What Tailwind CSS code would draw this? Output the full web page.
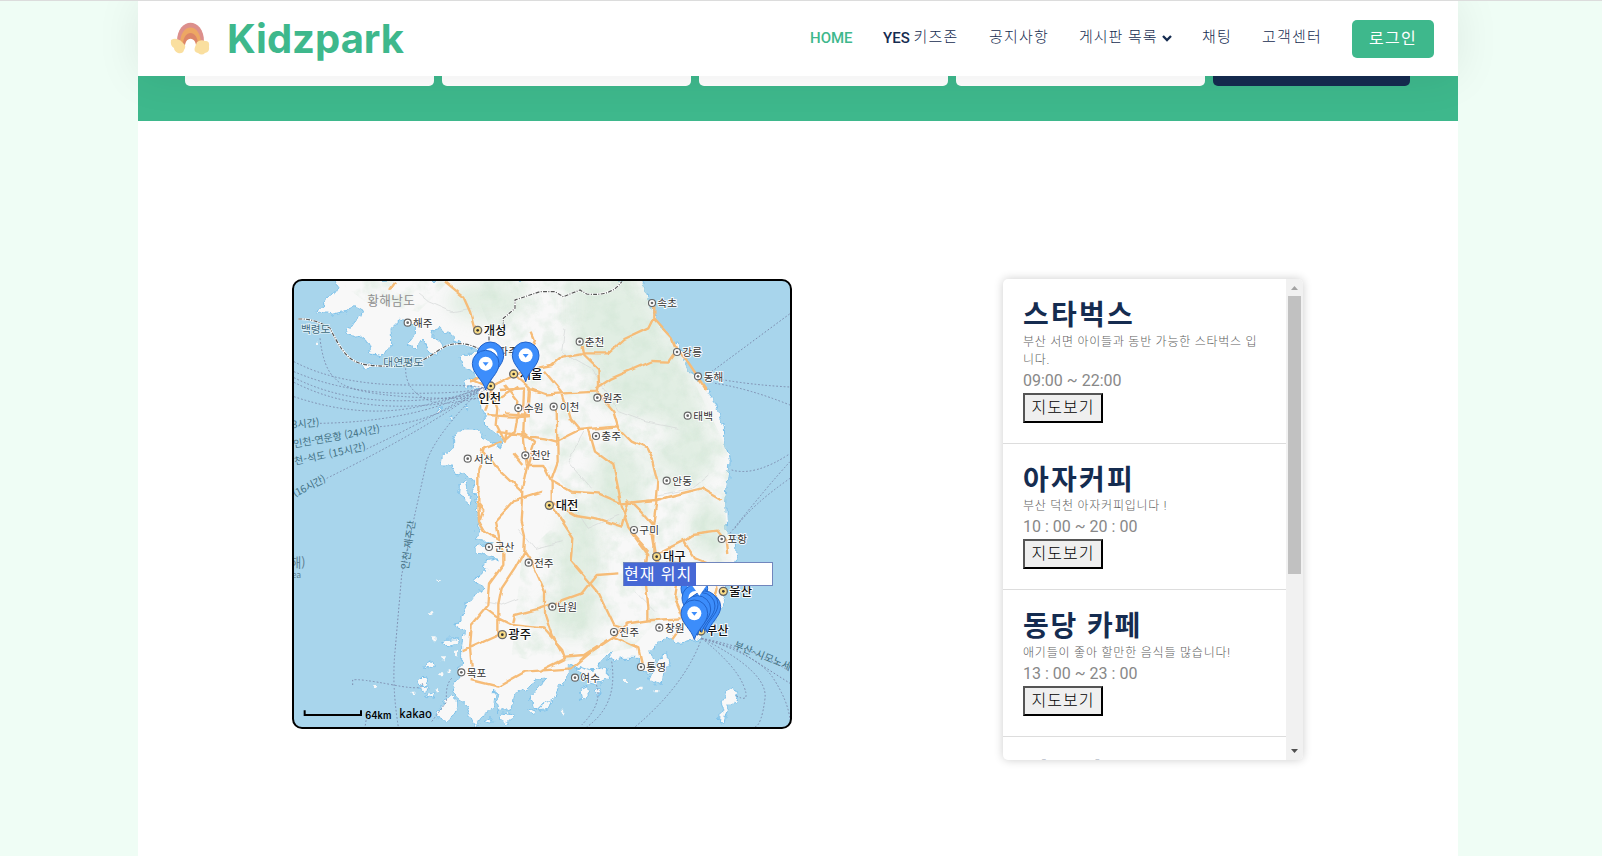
<!DOCTYPE html>
<html lang="ko">
<head>
<meta charset="utf-8">
<title>Kidzpark</title>
<script src="https://cdn.jsdelivr.net/npm/@tailwindcss/browser@4"></script>
</head>
<body class="h-[856px] overflow-hidden border-t border-[#dcdcdc] bg-[#effdf5] font-['Roboto','Noto_Sans_CJK_KR',sans-serif]">
<div class="ml-[138px] h-[856px] w-[1320px] bg-white">
  <header class="relative z-10 flex h-[75px] items-center bg-white pl-8 pr-6 shadow-[0_0_45px_rgba(0,0,0,0.08)]">
    <svg class="mt-[2px] h-[38px] w-[40px]" viewBox="0 0 40 38">
      <path d="M7 22C6-5 35-5 34 22L28 25H14Z" fill="#dc8f8c"/>
      <path d="M10 23C10 1 31 1 31 23L26 26H15Z" fill="#eda763"/>
      <path d="M13 24C13 8 28 8 28 24L25 27H16Z" fill="#dc8668"/>
      <path d="M15 29C13 14 28 14 26 29Z" fill="#fff"/>
      <path d="M1 19q3-2 6-1 4 1 6 4 4 3 1 7-1 4-6 3-4-2-4-5-4-2-3-8Z" fill="#fadf9f"/>
      <path d="M27 21q4-3 8-1 5-1 4 6 1 5-4 6-3 3-7 0-5-1-3-6Z" fill="#fadf9f"/>
    </svg>
    <h1 class="ml-[17px] font-['Inter'] text-[40px] font-bold leading-none text-[#3eb88c]">Kidzpark</h1>
    <nav class="ml-auto flex items-center text-[15px] font-medium text-[#152c50]">
      <a class="w-[73px] text-[#3eb88c]">HOME</a>
      <a class="w-[105px] whitespace-nowrap">YES <span class="relative -top-px font-light tracking-[1.2px]">키즈존</span></a>
      <a class="-mt-[2px] w-[91px] pl-px font-light tracking-[1.2px]">공지사항</a>
      <a class="-mt-[2px] flex w-[123px] items-center whitespace-nowrap font-light tracking-[1px]">게시판 목록
        <svg class="ml-1 h-[8px] w-[10px]" viewBox="0 0 10 8"><path d="m1 2 4 4 4-4" fill="none" stroke="#152c50" stroke-width="2.3"/></svg></a>
      <a class="-mt-[2px] w-[59px] font-light tracking-[1.2px]">채팅</a>
      <a class="-mt-[2px] w-[91px] pl-px font-light tracking-[1.2px]">고객센터</a>
      <button class="h-[38px] w-[82px] rounded-[5px] bg-[#3eb88c] text-base font-normal tracking-[1.2px] text-white">로그인</button>
    </nav>
  </header>
  <section class="flex h-[45px] gap-2 bg-[#3eb88c] pl-[47px]">
    <div class="h-[10px] w-[249px] rounded-b-[5px] bg-white"></div>
    <div class="h-[10px] w-[249px] rounded-b-[5px] bg-white"></div>
    <div class="h-[10px] w-[249px] rounded-b-[5px] bg-white"></div>
    <div class="h-[10px] w-[249px] rounded-b-[5px] bg-white"></div>
    <div class="h-[10px] w-[197px] rounded-b-[5px] bg-[#152c50]"></div>
  </section>
  <main class="flex items-start pt-[158px] pl-[154px]">
    <div class="relative h-[450px] w-[500px] shrink-0 overflow-hidden rounded-[10px] border-2 border-black bg-[#a8d5ec]">
      <svg class="block h-[446px] w-[496px] font-['Noto_Sans_CJK_KR',sans-serif]" viewBox="27 18 1488 1338">
        <defs>
          <filter id="coast" x="0" y="0" width="1560" height="1400" filterUnits="userSpaceOnUse"><feTurbulence type="fractalNoise" baseFrequency=".035" numOctaves="3" seed="8" result="n"/><feDisplacementMap in="SourceGraphic" in2="n" scale="30" xChannelSelector="R" yChannelSelector="G"/></filter>
          <filter id="road" x="0" y="0" width="1560" height="1400" filterUnits="userSpaceOnUse"><feTurbulence type="fractalNoise" baseFrequency=".02" numOctaves="2" seed="3" result="n"/><feDisplacementMap in="SourceGraphic" in2="n" scale="16" xChannelSelector="R" yChannelSelector="G"/></filter>
          <filter id="soft" x="-30%" y="-30%" width="160%" height="160%"><feGaussianBlur stdDeviation="24"/></filter>
          <filter id="relief" x="0" y="0" width="1560" height="1400" filterUnits="userSpaceOnUse"><feTurbulence type="fractalNoise" baseFrequency=".022" numOctaves="5" seed="12"/><feColorMatrix values="0 0 0 0 .62  0 0 0 0 .78  0 0 0 0 .65  2.2 0 0 0 -.9"/><feComposite in2="SourceGraphic" operator="in"/></filter>
          <path id="mainland" d="M158 10 150 45 120 85 92 108 140 118 175 110 210 95 235 110 225 135 180 165 200 190 235 185 250 215 258 240 290 245 320 205 318 160 350 130 385 150 385 180 370 210 395 220 410 195 425 225 460 235 470 205 440 170 470 160 500 190 525 210 570 215 590 232 545 232 525 250 535 278 560 285 575 310 530 318 535 335 580 345 585 400 600 420 602 450 625 470 652 500 645 520 600 490 560 465 535 465 500 490 500 520 475 540 470 570 500 570 515 600 535 595 560 610 570 650 577 700 582 760 568 790 590 800 630 805 568 820 585 838 640 850 590 862 605 880 560 920 600 940 570 955 545 990 530 1020 515 1055 535 1070 530 1110 530 1160 525 1200 500 1230 510 1265 545 1295 570 1356 590 1330 605 1310 625 1300 632 1245 642 1310 680 1300 690 1260 720 1240 755 1215 785 1212 765 1235 730 1275 765 1300 800 1285 822 1240 850 1195 850 1165 890 1180 885 1205 905 1220 925 1210 940 1170 975 1125 975 1160 1015 1150 1060 1150 1060 1190 1090 1195 1110 1160 1095 1130 1120 1100 1150 1090 1180 1105 1240 1095 1280 1040 1310 1000 1320 960 1330 900 1355 845 1350 800 1325 765 1322 675 1330 600 1336 560 1320 510 1318 455 1300 410 1290 380 1262 340 1215 285 1180 215 1110 130 1070 10Z"/>
          <clipPath id="land"><use href="#mainland"/></clipPath>
          <symbol id="pin" viewBox="-45 -45 90 130" overflow="visible"><path d="M0 79C-8 48-40 30-40 0A40 40 0 0 1 40 0C40 30 8 48 0 79Z" fill="#3c8dfb" stroke="#2263c9" stroke-width="3"/><circle r="21" fill="#fff"/><path d="M-9-4H9L0 7Z" fill="#3c8dfb"/></symbol>
          <g id="town"><circle r="10.500" fill="#fff" stroke="#666" stroke-width="3.500"/><circle r="4" fill="#666"/></g>
          <g id="city"><circle r="12" fill="#f9dc86" stroke="#666" stroke-width="4"/><circle r="4" fill="#333"/></g>
        </defs>
        <g filter="url(#coast)" fill="#f8f8f8" stroke="#7fc2ea" stroke-width="3">
          <use href="#mainland"/>
          <path d="M538 610 520 625 518 660 538 675 555 690 560 670 548 645ZM475 1280 500 1268 520 1285 508 1320 485 1340 450 1325 455 1305ZM405 1215 420 1200 428 1218 420 1235 400 1230ZM420 1168 440 1160 448 1172 430 1182ZM470 1110 485 1090 515 1088 520 1100 490 1112ZM400 1240 430 1230 425 1250ZM418 1262 450 1250 445 1270ZM640 1330 665 1310 690 1325 660 1345ZM600 1340 620 1325 625 1345ZM730 1305 755 1300 745 1318ZM875 1175 920 1190 970 1180 970 1210 940 1225 905 1220ZM885 1240 905 1230 910 1265 890 1275ZM925 1245 940 1240 945 1260ZM1115 1170 1145 1130 1150 1170 1130 1195 1125 1230 1095 1215ZM1330 1245 1345 1230 1358 1250 1345 1285 1330 1300 1320 1340 1300 1350 1302 1325 1315 1300 1308 1280ZM765 1310 775 1280 800 1270 790 1305ZM225 265 250 260 270 272 240 275ZM460 400h12v9h-12ZM540 385h8v9h-8ZM488 425h10v10h-10ZM545 395h8v9h-8Z"/>
          <path stroke-width="0" d="M90 200h9v7h-9ZM265 1230h12v12h-12ZM435 1018h7v7h-7ZM455 915h6v6h-6ZM380 1250h8v10h-8ZM445 1090h10v9h-10ZM510 1130h9v14h-9ZM470 1150h9v9h-9ZM460 1195h9v9h-9ZM485 1180h8v8h-8ZM455 1240h10v9h-10ZM1020 1215h9v9h-9ZM1050 1235h11v10h-11ZM1115 1245h8v7h-8ZM830 1310h8v8h-8ZM1090 1160h9v9h-9Z"/>
        </g>
        <g clip-path="url(#land)">
          <g filter="url(#soft)" fill="#d5e8d8" opacity=".65"><path d="M850 0 1060 20 1230 330 1300 560 1230 630 1080 560 1180 460 980 400 920 290 850 160Z"/><ellipse cx="880" cy="860" rx="65" ry="170"/><ellipse cx="860" cy="1020" rx="90" ry="70"/><ellipse cx="1270" cy="760" rx="55" ry="90"/><ellipse cx="610" cy="80" rx="120" ry="60"/><ellipse cx="1000" cy="630" rx="80" ry="120"/></g>
          <path filter="url(#relief)" opacity=".5" d="M550 0H1070L1340 550V900L1210 940 1040 1120 780 1170 680 1140 710 850 880 680 740 520 720 300 620 170ZM150 10H500L400 110 240 80Z"/>
        </g>
        <g fill="none" stroke="#d3d6d6" stroke-width="2" filter="url(#road)"><path d="M400 55 430 80 500 110 560 100M840 160 830 230 920 280 1000 410 1080 440 1180 460M900 470 850 560 920 640M700 760 750 820 830 800M600 980 650 990 700 970M1270 600 1220 640 1120 660M860 690 910 760 1000 720M1050 950 1110 1010"/></g>
        <path d="M40 132Q90 130 135 160C190 270 210 270 310 274S430 240 485 212Q540 195 590 226L612 205 612 175 655 155 655 130 690 100 690 75 765 50 810 50 835 65 885 45 905 57Q980 65 1010 20" fill="none" stroke="#fff" stroke-width="6"/>
        <path d="M40 132Q90 130 135 160C190 270 210 270 310 274S430 240 485 212Q540 195 590 226L612 205 612 175 655 155 655 130 690 100 690 75 765 50 810 50 835 65 885 45 905 57Q980 65 1010 20" fill="none" stroke="#555" stroke-width="3.500" stroke-dasharray="12 4 3 4"/>
        <g fill="none" stroke="#7d8cae" stroke-width="3" stroke-dasharray="5 6">
          <path d="M27 260Q160 330 370 330T592 338M27 290Q180 355 370 355T592 338M27 308Q190 390 410 375T592 338M27 322Q200 410 430 390T592 338M27 365Q250 440 440 385T592 338M105 445Q400 440 592 338M285 455Q460 440 592 338M245 522Q420 440 592 338M125 610Q430 460 592 338M105 190Q115 280 150 310 200 375 592 370M362 280Q360 360 460 385L592 338M592 338Q450 480 425 560 380 760 350 900L330 1130Q320 1230 340 1356M203 1230V1215Q220 1210 325 1230T410 1222M500 1210Q480 1230 485 1280L440 1340M245 1325 240 1356M1280 290 1515 116M1300 312Q1400 330 1515 336M1290 325Q1390 340 1515 390M1340 585Q1410 605 1515 536M1335 775Q1450 630 1515 560M1350 760Q1400 690 1515 610M1250 1090Q1200 1230 1050 1356M1250 1090Q1350 1170 1375 1230T1350 1260M1250 1090Q1450 1190 1440 1270T1410 1356M1250 1090Q1410 1120 1515 1190M1250 1090Q1420 1140 1465 1210T1515 1335M1250 1090 1350 1120 1515 1225M980 1160Q1000 1290 905 1356M930 1220Q960 1280 890 1350"/>
        </g>
        <g fill="none" stroke="#f6bc78" stroke-width="7" stroke-linejoin="round" filter="url(#road)">
          <path d="M480 20 535 65 555 110 570 165M330 20 315 42M560 315 620 340 600 410M555 320 600 300M610 340 690 300 750 280 800 270 830 245 890 235 970 235 1015 195 1090 160 1105 130 1105 90M1105 130 1160 190 1175 225 1150 260 1100 258 980 310 935 340M1175 225 1205 255 1265 345M893 210 898 240 940 280 942 330 938 350 780 358 730 340M780 290 830 350 855 430 885 465 930 460 995 455M938 355 985 410 1000 460 1040 500 1085 520 1105 560 1120 620 1115 675 1170 660 1250 640 1310 675M620 345 640 400 635 450 660 500 665 465M645 345 720 340 715 470 750 500 725 580 710 650 630 575 590 520M610 420 680 425 735 420M635 470 700 480 780 490 815 500 885 465M690 300 735 340 730 420 660 415M625 380 700 335M660 330 700 380 695 440 690 470 660 495M740 170 750 195 715 290M650 500 600 520 580 580 580 680 582 740 600 770 640 795M715 470 725 570 775 570 800 620 800 680M815 400 818 560 800 610M1115 675 1010 685 940 655 860 650 800 615M910 460 930 530 985 570 1010 690 1030 760 1090 830M685 535 715 570M575 680 595 705 585 735M640 790 630 740 690 675 770 650M640 790 655 830 655 870 615 925 610 990 560 1050 555 1120 560 1175M715 650 710 740 720 780 718 830 690 880 650 940 640 990 640 1030 680 1050 775 1060 830 1120 840 1150M530 1130 640 1080 640 1030 600 1000M560 1215 640 1235 720 1190 860 1180 920 1130 980 1090 1030 1045 1100 1035 1190 1030M840 1145 900 1140 985 1085 1060 1120 1070 1165M770 1185 840 1150 800 1080 780 1020 780 950 740 860 720 830M685 1045 690 1020 765 1000 890 955 935 900 1000 895M800 690 865 790 860 860 940 955 985 1050 1030 1065M800 680 870 720 935 730 1010 755 1030 680 1025 675M1030 760 1090 840 1080 900 1090 1000 1090 1040M1040 680 1070 710 1105 750 1105 840M1115 675 1100 780 1110 840M1110 840 1190 800 1220 780 1300 770 1325 800 1330 840M1190 790 1230 850 1280 870 1295 940 1280 1000 1230 1060M1110 850 1180 910 1170 970 1200 1040 1165 1090M1110 860 1200 870 1240 920 1290 930"/>
        </g>
        <g fill="#3d6a80" stroke="#e0f1f8" stroke-width="5" paint-order="stroke" font-size="32">
          <text x="48" y="174">백령도</text><text x="295" y="274" textLength="120">대연평도</text>
        </g>
        <g fill="#416f82" font-size="30"><text transform="translate(22 460) rotate(-5)">3시간)</text><text transform="translate(27 518) rotate(-10)" textLength="263">인천-연운항 (24시간)</text><text transform="translate(30 570) rotate(-12)" textLength="219">천-석도 (15시간)</text><text transform="translate(30 667) rotate(-27)" textLength="106">(16시간)</text><text transform="translate(370 885) rotate(-82)" textLength="148">인천-제주간</text><text transform="translate(1345 1118) rotate(22)" textLength="210">부산-시모노세키</text></g>
        <text x="14" y="876" font-size="38" fill="#5d7e91">해)</text><text x="20" y="910" font-size="26" fill="#5d7e91">ea</text>
        <text x="247" y="91" font-size="38" fill="#8f8f8f" textLength="143">황해남도</text>
        <g fill="#333" stroke="#fff" stroke-width="5" paint-order="stroke" font-size="32">
          <text x="384" y="155">해주</text><text x="640" y="240">파주</text><text x="717" y="411">수원</text><text x="824" y="407">이천</text><text x="566" y="563">서산</text><text x="737" y="553">천안</text><text x="899" y="212">춘천</text><text x="1117" y="96">속초</text><text x="1192" y="244">강릉</text><text x="1256" y="317">동해</text><text x="953" y="381">원주</text><text x="949" y="496">충주</text><text x="1225" y="434">태백</text><text x="1162" y="629">안동</text><text x="629" y="829">군산</text><text x="747" y="876">전주</text><text x="1063" y="778">구미</text><text x="1327" y="805">포항</text><text x="817" y="1008">남원</text><text x="545" y="1205">목포</text><text x="1003" y="1084">진주</text><text x="1140" y="1071">창원</text><text x="886" y="1221">여수</text><text x="1084" y="1189">통영</text>
        </g>
        <g fill="#111" stroke="#fff" stroke-width="5" paint-order="stroke" font-size="37" font-weight="500"><text x="596" y="180">개성</text><text x="704" y="312">서울</text><text x="580" y="384">인천</text><text x="812" y="704">대전</text><text x="1134" y="858">대구</text><text x="1333" y="962">울산</text><text x="1263" y="1080">부산</text><text x="670" y="1093">광주</text></g>
        <g><use href="#town" x="368" y="143"/><use href="#town" x="700" y="399"/><use href="#town" x="806" y="395"/><use href="#town" x="548" y="551"/><use href="#town" x="721" y="541"/><use href="#town" x="884" y="200"/><use href="#town" x="1101" y="84"/><use href="#town" x="1176" y="231"/><use href="#town" x="1239" y="304"/><use href="#town" x="937" y="368"/><use href="#town" x="933" y="483"/><use href="#town" x="1208" y="422"/><use href="#town" x="1145" y="617"/><use href="#town" x="612" y="816"/><use href="#town" x="731" y="863"/><use href="#town" x="1047" y="765"/><use href="#town" x="1310" y="792"/><use href="#town" x="802" y="995"/><use href="#town" x="529" y="1192"/><use href="#town" x="987" y="1071"/><use href="#town" x="1123" y="1058"/><use href="#town" x="870" y="1208"/><use href="#town" x="1068" y="1176"/><use href="#city" x="578" y="166"/><use href="#city" x="686" y="297"/><use href="#city" x="617" y="333"/><use href="#city" x="793" y="691"/><use href="#city" x="1115" y="845"/><use href="#city" x="1315" y="949"/><use href="#city" x="1248" y="1068"/><use href="#city" x="652" y="1079"/></g>
        <use href="#pin" x="571" y="196" width="90" height="130"/><use href="#pin" x="557" y="221" width="90" height="130"/><use href="#pin" x="677" y="196" width="90" height="130"/>
        <use href="#pin" x="1183" y="895" width="90" height="130"/><use href="#pin" x="1186" y="924" width="90" height="130"/><use href="#pin" x="1222" y="950" width="90" height="130"/><use href="#pin" x="1214" y="943" width="90" height="130"/><use href="#pin" x="1205" y="948" width="90" height="130"/><use href="#pin" x="1192" y="957" width="90" height="130"/><use href="#pin" x="1183" y="970" width="90" height="130"/>
        <path d="M1222 932H1264L1243 962Z" fill="#fff"/>
        <path d="M59 1306V1320H228V1306" fill="none" stroke="#000" stroke-width="6"/>
        <text x="241" y="1331" font-size="29" font-weight="600" textLength="78" lengthAdjust="spacingAndGlyphs" font-family="Inter">64km</text><text x="343" y="1330" font-size="38" font-weight="500" textLength="98" lengthAdjust="spacingAndGlyphs" font-family="Noto Sans">kakao</text>
      </svg>
      <div class="absolute left-[329px] top-[281px] h-[24px] w-[150px] border border-[#7186bd] bg-white"><div class="h-[23px] w-[72px] whitespace-nowrap bg-[#4668d5] text-base leading-[23px] tracking-[1.1px] text-white">현재 위치</div></div>
    </div>
    <aside class="ml-[211px] flex h-[481px] w-[300px] overflow-hidden rounded-[5px] bg-white text-[#888] shadow-[0_0_10px_rgba(0,0,0,0.2)]">
      <div class="h-full w-[283px] overflow-hidden">
        <article class="h-[164.6px] border-b border-[#ddd] p-5">
          <h2 class="h-[33.6px] text-[28px] font-bold leading-[34px] tracking-[2.2px] text-[#152c50]">스타벅스</h2>
          <p class="whitespace-nowrap text-[12px] font-light leading-[18px] tracking-[0.75px] text-[#606060]">부산 서면 아이들과 동반 가능한 스타벅스 입<br>니다.</p>
          <p class="text-base leading-6">09:00 ~ 22:00</p>
          <button class="block h-[30px] w-[80px] border-2 border-t-[#555] border-r-black border-b-black border-l-[#555] bg-[#efefef] text-base font-light leading-[24px] tracking-[1px] text-black">지도보기</button>
        </article>
        <article class="h-[146.6px] border-b border-[#ddd] p-5">
          <h2 class="h-[33.6px] text-[28px] font-bold leading-[34px] tracking-[2.2px] text-[#152c50]">아자커피</h2>
          <p class="whitespace-nowrap text-[12px] font-light leading-[18px] tracking-[0.75px] text-[#606060]">부산 덕천 아자커피입니다 !</p>
          <p class="text-base leading-6">10 : 00 ~ 20 : 00</p>
          <button class="block h-[30px] w-[80px] border-2 border-t-[#555] border-r-black border-b-black border-l-[#555] bg-[#efefef] text-base font-light leading-[24px] tracking-[1px] text-black">지도보기</button>
        </article>
        <article class="h-[146.6px] border-b border-[#ddd] p-5">
          <h2 class="h-[33.6px] text-[28px] font-bold leading-[34px] tracking-[1.8px] text-[#152c50]">동당 카페</h2>
          <p class="whitespace-nowrap text-[12px] font-light leading-[18px] tracking-[0.8px] text-[#606060]">애기들이 좋아 할만한 음식들 많습니다!</p>
          <p class="text-base leading-6">13 : 00 ~ 23 : 00</p>
          <button class="block h-[30px] w-[80px] border-2 border-t-[#555] border-r-black border-b-black border-l-[#555] bg-[#efefef] text-base font-light leading-[24px] tracking-[1px] text-black">지도보기</button>
        </article>
        <article class="p-5"><h2 class="text-[28px] font-bold leading-[36px] tracking-[1.6px] text-[#152c50]">키즈파크</h2></article>
      </div>
      <div class="flex w-[17px] flex-col items-center justify-between bg-[#f1f1f1]">
        <svg class="h-[17px] w-[17px]" viewBox="0 0 17 17"><path d="M5 11h7L8.500 7Z" fill="#a3a3a3"/></svg>
        <div class="mb-auto h-[278px] w-[13px] bg-[#c1c1c1]"></div>
        <svg class="h-[17px] w-[17px]" viewBox="0 0 17 17"><path d="M5 6h7L8.500 10Z" fill="#505050"/></svg>
      </div>
    </aside>
  </main>
</div>
</body>
</html>
